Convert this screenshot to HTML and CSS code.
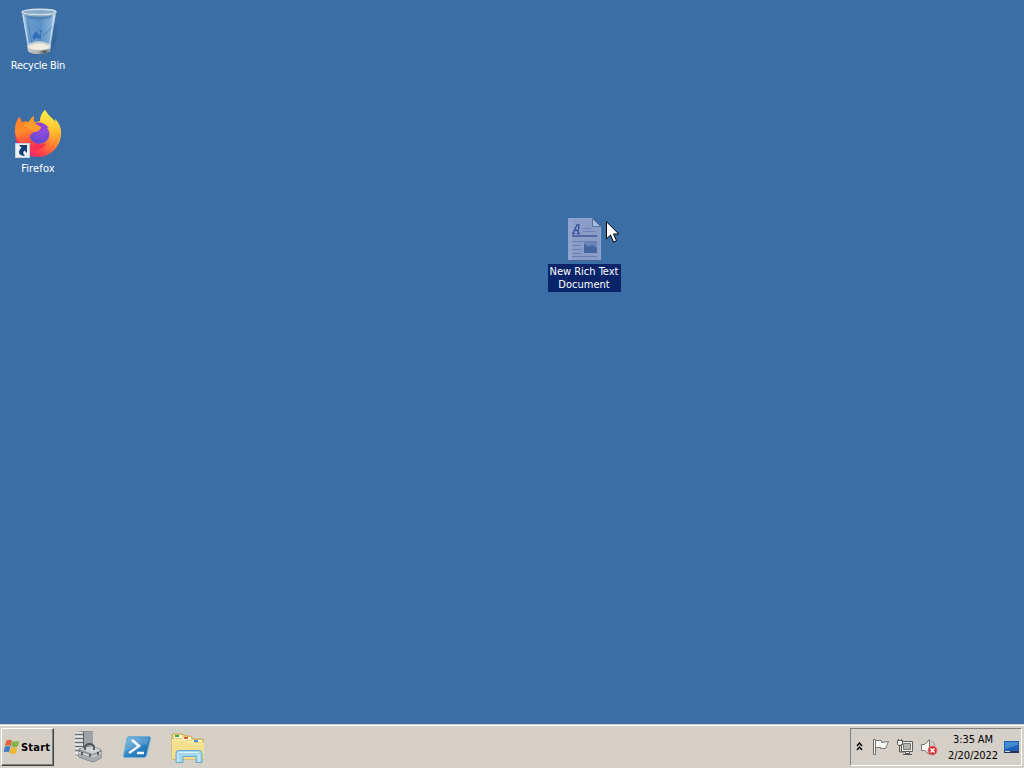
FILE: index.html
```html
<!doctype html>
<html lang="en">
  <head>
    <meta charset="UTF-8" />
    <meta name="viewport" content="width=device-width, initial-scale=1.0" />
    <title>Desktop</title>
    <link rel="stylesheet" href="styles.css">
  </head>
  <body>
    <main class="desktop">
      <div class="shortcut recycle-bin">
        <svg width="48" height="48" viewBox="0 0 48 48">
          <defs>
            <linearGradient id="glass" x1="0" x2="1">
              <stop offset="0" stop-color="#b9d5ea" />
              <stop offset=".2" stop-color="#6799c9" />
              <stop offset=".55" stop-color="#5c91c6" />
              <stop offset=".85" stop-color="#82afd6" />
              <stop offset="1" stop-color="#c5dced" />
            </linearGradient>
            <linearGradient id="base" x1="0" x2="1">
              <stop offset="0" stop-color="#c9ccca" />
              <stop offset=".5" stop-color="#a9aca9" />
              <stop offset=".75" stop-color="#4e5557" />
              <stop offset="1" stop-color="#a5aba9" />
            </linearGradient>
          </defs>
          <path d="M38 15l6 5-4 22-5 4z" fill="#244f7d" opacity=".25" />
          <path d="M8 6l6 37c3 4 19 4 22 0l6-37z" fill="url(#glass)" />
          <path d="M13 38c6-5 17-5 24 0l-1 6c-5 4-18 4-22 0z" fill="#c4cdd3" />
          <path d="M14 40c7-5 15-5 22 0-5 4-17 4-22 0z" fill="#f1ebe0" />
          <path d="M14 42c7 2 15 2 22 0v2c-3 4-19 4-22 0z" fill="url(#base)" />
          <path d="M18 30l4-6 3 4 2-1v5l-5-1-2 2zM25 22l3 2-1 3z" fill="#2465b5" opacity=".8" />
          <path d="M29 29l10-10M13 12l5 24" stroke="#346fa9" fill="none" opacity=".6" />
          <path d="M9 8l6 33M40 8l-5 33" stroke="#d4e6f1" fill="none" opacity=".8" />
          <path d="M10 7h29l-2 4c-7 2-17 2-25 0z" fill="#3c72aa" opacity=".5" />
          <ellipse cx="25" cy="5" rx="17" ry="2.700" fill="#87abc9" stroke="#d3dfe7" stroke-width="1.400" />
          <path d="M8 6c4 4 30 4 34 0" stroke="#a8bac6" fill="none" />
        </svg>
        <span class="label">Recycle Bin</span>
      </div>

      <div class="shortcut firefox">
        <svg width="48" height="48" viewBox="0 0 48 48">
          <defs>
            <linearGradient id="flame" x1=".85" y1=".1" x2=".2" y2=".95">
              <stop offset="0" stop-color="#ffed4a" />
              <stop offset=".3" stop-color="#ffbd30" />
              <stop offset=".55" stop-color="#ff7139" />
              <stop offset=".8" stop-color="#fb3a50" />
              <stop offset="1" stop-color="#e82079" />
            </linearGradient>
            <linearGradient id="tail" x1="0" y1="0" x2="0" y2="1">
              <stop offset="0" stop-color="#fff04e" />
              <stop offset=".5" stop-color="#ffc52e" />
              <stop offset="1" stop-color="#ff6536" />
            </linearGradient>
            <radialGradient id="globe" cx=".65" cy=".2" r=".85">
              <stop offset="0" stop-color="#a14be6" />
              <stop offset="1" stop-color="#5b49cd" />
            </radialGradient>
            <linearGradient id="fox" x1=".2" y1="0" x2=".5" y2="1">
              <stop offset="0" stop-color="#ff7c2c" />
              <stop offset=".4" stop-color="#ff8c2a" />
              <stop offset=".7" stop-color="#ff5b3c" />
              <stop offset="1" stop-color="#f52b58" />
            </linearGradient>
          </defs>
          <path d="M31 0c-4 4-5 8-5 11-6 1-11 4-15 10L6 7c-4 5-5 10-5 16 0 13 10 24 23 24s23-11 23-24c0-7-3-11-6-14l1 4C40 9 34 6 31 0z" fill="url(#flame)" />
          <path d="M31 0c-4 4-5 8-4 11 6 4 11 8 11 15 0 6-3 11-8 14 9-1 15-7 17-17 0-6-3-11-6-14l1 4C40 9 34 6 31 0z" fill="url(#tail)" />
          <ellipse cx="25" cy="24" rx="10.500" ry="10" fill="url(#globe)" />
          <path d="M17 16c4-5 12-5 18 2-4-1-6 1-7 3z" fill="#8c42db" />
          <path d="M5 7c1 3 2 5 4 5 2-1 4-1 6 0 1-3 3-5 5-6-1 4 0 6 2 8 2 2 5 2 5 4-1 2-4 4-7 4-2 1-4 3-4 5 1 6 10 9 16 6-2 6-11 9-19 5C5 33 1 27 1 21S2 11 5 7z" fill="url(#fox)" />
          <path d="M15 12c1-3 3-5 5-6-1 4 0 6 2 8 2 2 5 2 5 4-1 2-4 4-7 4l-6-4-5-3z" fill="#ffa12c" opacity=".8" />
        </svg>
        <svg class="shortcut-arrow" width="15" height="15" viewBox="0 0 15 15">
          <path d="M.5.500h14v14H.5z" fill="#eaf0f6" stroke="#c3d2e0" />
          <path d="M4 2h8v8L9.500 7.500C7.500 9 8 11 10 13 4 13 2 9 6.500 4.500z" fill="#163f77" />
        </svg>
        <span class="label">Firefox</span>
      </div>

      <div class="shortcut document">
        <svg width="48" height="48" viewBox="0 0 48 48">
          <path d="M8.500 3.500h24l8 8v34h-32z" fill="#8b9cc8" stroke="#8fa5cd" />
          <path d="M9 4h4v41H9z" fill="#a1b1d7" opacity=".35" />
          <path d="M32.500 3.500v8h8z" fill="#a9bedc" stroke="#54719f" />
          <path d="M13 18l4-8h2l-1 8M15 15.500h4M12 18.500h3M17 18.500h3" stroke="#35529a" stroke-width="1.300" fill="none" />
          <path d="M23 13.500h8M23 16.500h13" stroke="#6b80b4" />
          <path d="M12 21h25" stroke="#3b5193" stroke-width="1.400" />
          <path d="M12 26.500h25M12 30.500h9M12 34.500h9M12 38.500h9M12 41.500h25" stroke="#6a80b3" />
          <path d="M24 26h13v12H24z" fill="#6883b6" />
          <path d="M24 29l5 3 3-2 5 3v5H24z" fill="#44669f" />
          <path d="M8 45.500h33" stroke="#47689b" />
        </svg>
        <span class="label selected">New Rich Text<br>Document</span>
      </div>

      <svg class="cursor" width="14" height="23" viewBox="0 0 14 23">
        <path d="M.5.800v17l4-3.800 3 7 3-1.300-3-6.700h5.300z" fill="#fff" stroke="#000" />
      </svg>
    </main>

    <footer class="taskbar">
      <button class="start">
        <svg width="16" height="16" viewBox="0 0 16 16">
          <path d="M2.500 1.500c2-1.200 3.500-1 5.500 0L6.800 7C5 6 3.500 6 1 7z" fill="#df6338" />
          <path d="M8.500 2c2 1 4 1 7-.5l-1.800 6c-2 1-4.500 1-6.500 0z" fill="#83b447" />
          <path d="M.8 7.700c2-1 4-1 5.700 0L5 13.500c-1.500-1-3.500-1-5.500 0z" fill="#4380c7" />
          <path d="M7 8.200c2 1 4.500 1 6.500 0L12 14.200c-2 1-4.500 1-6.500 0z" fill="#eeb72e" />
        </svg>
        <span>Start</span>
      </button>

      <nav class="quick-launch">
        <svg width="32" height="34" viewBox="0 0 32 34">
          <path d="M3 2l7-1h11v24l-9 3-9-3z" fill="#8f9296" />
          <path d="M3 2h8v24l-8-2z" fill="#e9e9e5" />
          <path d="M3 4.500h8M3 8.500h8M3 12.500h8M3 16.500h8M3 20.500h8" stroke="#697176" stroke-width="1.400" />
          <path d="M12 2h9v18h-9z" fill="#a0a2a5" />
          <path d="M11.500 2v20" stroke="#555b5f" />
          <path d="M7 19l13-3 9 4v8l-8 4-14-5z" fill="#8f9599" stroke="#687075" stroke-linejoin="round" />
          <path d="M7 19l13-3 9 4-8 4z" fill="#cfd2d3" />
          <path d="M7 22l14 4 8-4v6l-8 4-14-5z" fill="#a7abad" />
          <path d="M13 20v-3c1-4 8-4 9 0v3" fill="none" stroke="#4c5256" stroke-width="1.800" />
          <path d="M7 22.500l14 4 8-4" fill="none" stroke="#eceeed" />
          <path d="M10 22v3M18 24v3M26 22v3" stroke="#42494d" stroke-width="1.600" />
        </svg>
        <svg width="32" height="34" viewBox="0 0 32 34">
          <defs>
            <linearGradient id="shell" x1="0" y1="0" x2="1" y2="1">
              <stop offset="0" stop-color="#6db4df" />
              <stop offset=".5" stop-color="#3286c5" />
              <stop offset="1" stop-color="#1669ab" />
            </linearGradient>
          </defs>
          <path d="M8 6.500h20q2 0 1.500 2l-4 17q-.5 2-2.500 2H4q-2 0-1.500-2L6 8.500q.4-2 2-2z" fill="url(#shell)" stroke="#75afd0" />
          <path d="M8 7.500h20l-2 7c-6-1-13 2-22 7l3-13z" fill="#fff" opacity=".17" />
          <path d="M11 10l7 6-10 7M16 23h7" fill="none" stroke="#f5faff" stroke-width="2.600" />
        </svg>
        <svg width="34" height="34" viewBox="0 0 34 34">
          <path d="M2 5q0-1 1-1h10l2 2h6l2 3h9q2 0 2 2v18H2z" fill="#e9cf72" stroke="#c9ad50" />
          <path d="M4 5h8v3H4zM13 7h8v3h-8zM22 10h10v2H22z" fill="#fff8d9" />
          <path d="M5 5h4v2H5z" fill="#36a64a" />
          <path d="M14 7h4v2h-4z" fill="#d65f39" />
          <path d="M24 10h4v2h-4z" fill="#498ece" />
          <path d="M2 9h11l2 2h7l2 2h10v16H2z" fill="#f3df8e" />
          <path d="M3 10h11l2 2h6l2 2h9" fill="none" stroke="#fff2b5" />
          <path d="M8 20.500h21q3 0 3 3v9h-6v-6H13v6H6v-9q0-3 2-3z" fill="#a5d6eb" stroke="#65aac9" />
          <path d="M8 22.500h21M8 24v8M29 24v8" fill="none" stroke="#d9f2fa" />
        </svg>
      </nav>

      <section class="tray">
        <svg width="8" height="10" viewBox="0 0 8 10">
          <path d="M1 4l2.500-3L6 4M1 8l2.500-3L6 8" fill="none" stroke="#000" stroke-width="1.400" />
        </svg>
        <svg class="flag" width="18" height="18" viewBox="0 0 18 18">
          <path d="M1.500 1.500h2v15h-2z" fill="#f7f7f2" stroke="#696966" />
          <path d="M3.500 2.500h6v2l7-1-3 7h-5v-1h-5z" fill="#f7f7f2" stroke="#777" />
        </svg>
        <svg class="network" width="18" height="18" viewBox="0 0 18 18">
          <path d="M5.500 3.500h11v10h-11z" fill="#f0f0eb" stroke="#5e5e5b" />
          <path d="M7.500 5.500h7v6h-7z" fill="#b5b4ae" stroke="#777" />
          <path d="M9.500 13.500h4v2h-4zM7 16.500h9" fill="#eee" stroke="#555" />
          <path d="M1.500 2.500h5v4l-1 1h-3l-1-1zM2.500 1v2M5.500 1v2M3.500 8v6h5" fill="none" stroke="#5c5c58" />
          <path d="M2 3h4v3H2z" fill="#f3f3ef" />
        </svg>
        <svg class="volume" width="18" height="18" viewBox="0 0 18 18">
          <path d="M1.500 6.500h3l5-5v15l-5-4h-3z" fill="#f7f7f2" stroke="#74746f" />
          <path d="M12 3q3 3 3 6" fill="none" stroke="#999" />
          <circle cx="12.500" cy="12.500" r="4.500" fill="#d42f35" stroke="#d98580" />
          <path d="M10.500 10.500l4 4M14.500 10.500l-4 4" stroke="#fff" stroke-width="1.600" />
        </svg>
        <div class="clock">
          <span class="time">3:35 AM</span>
          <span>2/20/2022</span>
        </div>
        <svg class="show-desktop" width="15" height="14" viewBox="0 0 15 14">
          <path d="M0 1h15v10H0z" fill="#1e60b5" />
          <path d="M1 2h13v3L1 9z" fill="#438ad1" />
          <path d="M0 11h15v2H0z" fill="#26344b" />
          <path d="M1 11.500h5" stroke="#d5e2df" />
        </svg>
      </section>
    </footer>
  </body>
</html>
```

FILE: styles.css
```css
* {
  box-sizing: border-box;
}

body {
  display: flex;
  flex-direction: column;
  width: 1024px;
  height: 768px;
  margin: 0;
  overflow: hidden;
  background-color: #3b6ea5;
  font-family: 'DejaVu Sans Condensed', 'DejaVu Sans', sans-serif;
  font-stretch: condensed;
  font-size: 11px;
}

svg {
  display: block;
  flex-shrink: 0;
}

.desktop {
  position: relative;
  flex: 1;
}

/* desktop items */
.shortcut {
  position: absolute;
  display: flex;
  flex-direction: column;
  align-items: center;
  width: 76px;
}

.recycle-bin {
  left: 0;
  top: 7px;
}

.firefox {
  left: 0;
  top: 110px;
}

.document {
  left: 546px;
  top: 215px;
}

.label {
  margin-top: 4px;
  color: white;
  line-height: 13px;
  text-align: center;
  white-space: nowrap;
  letter-spacing: -0.25px;
}

.firefox .label {
  letter-spacing: 0.15px;
}

.label.selected {
  width: 73px;
  height: 28px;
  margin-top: 1px;
  padding-top: 1px;
  background-color: #0a246a;
  letter-spacing: 0;
}

.shortcut-arrow {
  position: absolute;
  left: 15px;
  top: 33px;
}

.cursor {
  position: absolute;
  left: 606px;
  top: 221px;
}

/* taskbar */
.taskbar {
  display: flex;
  align-items: flex-start;
  height: 44px;
  padding: 3px 2px 2px 1px;
  border-top: 1px solid #d4d0c8;
  background-color: #d4d0c8;
  box-shadow: inset 0 1px #fff;
}

.start {
  display: flex;
  align-items: center;
  gap: 1px;
  width: 53px;
  height: 38px;
  padding: 0 2px;
  border: 1px solid;
  border-color: #fff #404040 #404040 #fff;
  background-color: #d4d0c8;
  box-shadow: inset -1px -1px #808080;
  color: #000;
  font-family: inherit;
  font-size: 11px;
  font-weight: bold;
  font-stretch: condensed;
  letter-spacing: 0.2px;
}

.quick-launch {
  display: flex;
  gap: 17px;
  padding: 2px 0 0 18px;
}

.tray {
  display: flex;
  align-items: center;
  width: 172px;
  height: 38px;
  margin-left: auto;
  padding-left: 5px;
  border: 1px solid;
  border-color: #808080 #fff #fff #808080;
}

.flag {
  margin-left: 8px;
}

.network {
  margin-left: 6px;
}

.volume {
  margin-left: 6px;
}

.clock {
  display: flex;
  flex-direction: column;
  align-items: center;
  width: 52px;
  margin-left: 9px;
  padding-top: 2px;
  line-height: 16px;
  white-space: nowrap;
  letter-spacing: -0.1px;
}

.time {
  letter-spacing: -0.1px;
}

.show-desktop {
  margin-left: 5px;
}
```
